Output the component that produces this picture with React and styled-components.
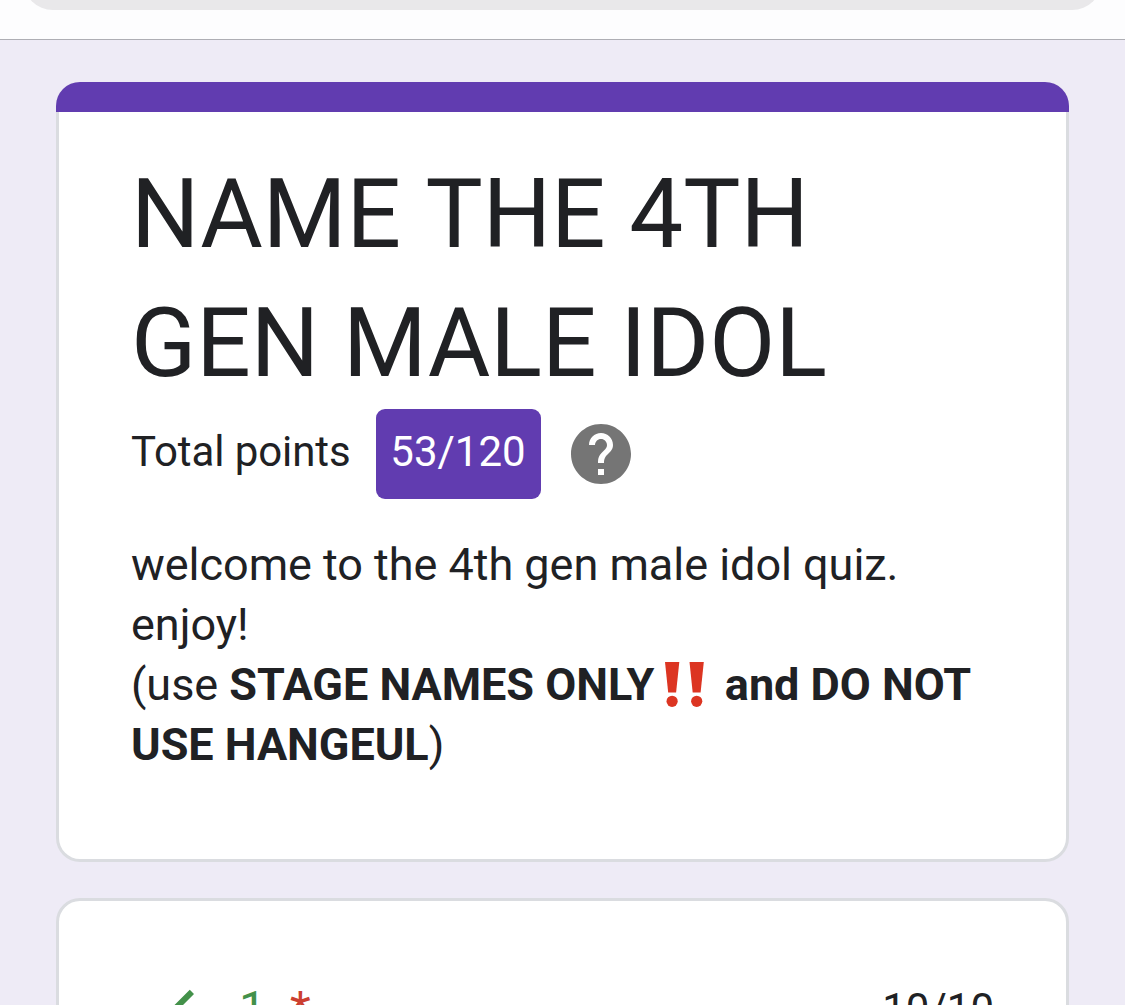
import styled, { createGlobalStyle } from "styled-components";

function App() {
  return (
    <Page>
      <GlobalStyle />
      <BrowserBar>
        <AddressPill />
      </BrowserBar>
      <Form>
        <HeaderCard>
          <Accent />
          <HeaderBody>
            <Title>
              NAME <Word>THE</Word> 4TH GEN MALE IDOL
            </Title>
            <ScoreRow>
              <ScoreLabel>Total points</ScoreLabel>
              <Score>53/120</Score>
              <HelpIcon viewBox="2 2 20 20">
                <path d="M12 2C6.48 2 2 6.48 2 12s4.48 10 10 10 10-4.48 10-10S17.52 2 12 2zm1 17h-2v-2h2v2zm2.07-7.75l-.9.92C13.45 12.9 13 13.5 13 15h-2v-.5c0-1.1.45-2.1 1.17-2.83l1.24-1.26c.37-.36.59-.86.59-1.41 0-1.1-.9-2-2-2s-2 .9-2 2H8c0-2.21 1.79-4 4-4s4 1.79 4 4c0 .88-.36 1.68-.93 2.25z" />
              </HelpIcon>
            </ScoreRow>
            <Description>
              welcome to the 4th gen male idol quiz.
              <br />
              enjoy!
              <br />
              (use <b>STAGE NAMES ONLY</b>
              <Bangs viewBox="0 0 56 48">
                <path d="M4 1h14.3l-3.2 30.5H7.2z" />
                <circle cx="11.1" cy="40.3" r="5.6" />
                <path d="M28.5 1h14.3l-3.2 30.5h-7.9z" />
                <circle cx="35.7" cy="40.3" r="5.6" />
              </Bangs>
              <b> and DO NOT USE HANGEUL</b>)
            </Description>
          </HeaderBody>
        </HeaderCard>
        <QuestionCard>
          <CheckIcon viewBox="0 0 24 24">
            <path d="M9 16.17L4.83 12l-1.42 1.41L9 19 21 7l-1.41-1.41z" />
          </CheckIcon>
          <QuestionTitle>
            1 <Required>*</Required>
          </QuestionTitle>
          <Points>10/10</Points>
        </QuestionCard>
      </Form>
    </Page>
  );
}

const GlobalStyle = createGlobalStyle`
  * {
    box-sizing: border-box;
  }

  body {
    margin: 0;
    font-family: Roboto, sans-serif;
    color: #202124;
  }
`;

const Page = styled.div`
  height: 1005px;
  overflow: hidden;
  background-color: #eeebf6;
`;

const BrowserBar = styled.div`
  height: 40px;
  padding: 0 23px;
  overflow: hidden;
  background-color: #fdfdfe;
  border-bottom: 1px solid #aeaeb4;
`;

const AddressPill = styled.div`
  height: 100px;
  margin-top: -90px;
  border-radius: 30px;
  background-color: #e9e8ea;
`;

const Form = styled.main`
  display: flex;
  flex-direction: column;
  gap: 36px;
  padding: 42px 56px 0;
`;

const Card = styled.section`
  background-color: #fff;
  border: 3px solid #dadce0;
  border-radius: 24px;
`;

const HeaderCard = styled(Card)`
  height: 780px;
  border-top: none;
`;

const Accent = styled.div`
  height: 30px;
  margin: 0 -3px;
  border-radius: 24px 24px 0 0;
  background-color: #613cb0;
`;

const HeaderBody = styled.div`
  padding: 38px 72px 0;
`;

const Title = styled.h1`
  width: 760px;
  margin: 0;
  font-size: 96px;
  font-weight: 400;
  line-height: 129px;
  letter-spacing: -0.05px;
`;

const Word = styled.span`
  margin-left: 0.5px;
`;

const ScoreRow = styled.div`
  display: flex;
  align-items: center;
  height: 90px;
  margin-top: 1px;
`;

const ScoreLabel = styled.span`
  width: 245px;
  padding-bottom: 5px;
  font-size: 42px;
  line-height: 60px;
  letter-spacing: -0.08px;
`;

const Score = styled.span`
  width: 165px;
  height: 90px;
  padding-right: 1px;
  border-radius: 9px;
  background-color: #613cb0;
  color: #fff;
  font-size: 42px;
  line-height: 85px;
  text-align: center;
`;

const HelpIcon = styled.svg`
  width: 60px;
  height: 60px;
  margin-left: 30px;
  fill: #757575;
`;

const Description = styled.p`
  margin: 36px 0 0;
  font-size: 45px;
  line-height: 60px;
  letter-spacing: -0.03px;

  b {
    font-weight: 700;
  }
`;

const Bangs = styled.svg`
  width: 56px;
  height: 48px;
  margin: -10px -3px -10px 6.5px;
  vertical-align: 1px;
  fill: #dc3522;
`;

const QuestionCard = styled(Card)`
  display: flex;
  align-items: flex-start;
  height: 400px;
  padding: 72px 72px 0;
`;

const CheckIcon = styled.svg`
  width: 72px;
  height: 72px;
  fill: #43914a;
`;

const QuestionTitle = styled.h2`
  flex: 1;
  margin: 0 0 0 36px;
  font-size: 48px;
  font-weight: 400;
  line-height: 72px;
  color: #43914a;
`;

const Required = styled.span`
  margin-left: 12px;
  color: #cc3f31;
`;

const Points = styled.span`
  font-size: 42px;
  line-height: 72px;
`;

export default App;
